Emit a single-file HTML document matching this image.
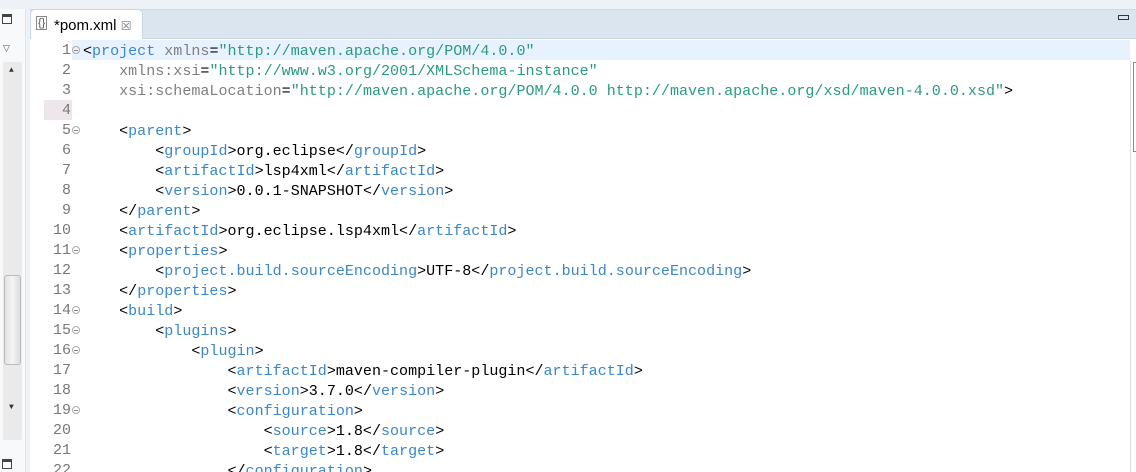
<!DOCTYPE html>
<html><head><meta charset="utf-8"><style>
*{margin:0;padding:0;box-sizing:border-box}
html,body{width:1136px;height:472px;overflow:hidden}
body{background:#eef1f6;position:relative;font-family:"Liberation Mono",monospace}
.lp{position:absolute;left:0;top:9px;width:26px;height:463px;background:#f7f9fb;border-right:1px solid #e0e4ea}
.sb{position:absolute;left:3px;top:53px;width:19px;height:378px;background:#eaeaea;border-radius:2px}
.thumb{position:absolute;left:1px;top:213px;width:17px;height:90px;background:linear-gradient(90deg,#e2e2e2,#f4f4f4,#dcdcdc);border:1px solid #bcbcbc;border-radius:3px}
.tabbar{position:absolute;left:30px;top:9px;width:1106px;height:30px;background:#dae5f0;border-top:1px solid #cfd9e4;border-bottom:1px solid #c9d6e3}
.tab{position:absolute;left:30px;top:9px;width:113px;height:30px;background:#fff;border:1px solid #c9d6e3;border-bottom:none;border-radius:5px 5px 0 0;font:15px "Liberation Sans",sans-serif;color:#000;padding:7px 0 0 23px}
.editor{position:absolute;left:30px;top:39px;width:1106px;height:433px;background:#fff}
.hl{position:absolute;left:72px;top:40px;width:1058px;height:20px;background:#e8f2fe}
.g4{position:absolute;left:44px;top:100px;width:28px;height:20px;background:#ede6ea}
.ln{position:absolute;left:30px;top:41px;width:41px;text-align:right;color:#787878;font-size:15px;line-height:20px}
.code{position:absolute;left:83px;top:41px;font-size:15.05px;line-height:20px;white-space:pre;color:#000}
.t{color:#3b87c5}.a{color:#7f7f7f}.s{color:#2a9a82}
.f{position:absolute;left:72px;width:8px;height:8px;border:1px solid #aaa;border-radius:50%;font-size:0}
.f:after{content:"";position:absolute;left:1px;top:3px;width:4px;height:1px;background:#888}
.vs{position:absolute;left:1130px;top:61px;width:6px;height:411px;border-left:1px solid #ddd}
.vt{position:absolute;left:1133px;top:62px;width:3px;height:90px;border:1px solid #888;border-right:none}
</style></head><body>
<div class="lp"><div class="sb"><div class="thumb"></div></div></div>
<div style="position:absolute;left:2px;top:14px;width:10px;height:10px;border:1px solid #444;border-top-width:3px"></div>
<div style="position:absolute;left:3px;top:44px;font-size:9px;color:#555">▽</div>
<div style="position:absolute;left:9px;top:66px;font-size:8px;color:#333">▲</div>
<div style="position:absolute;left:9px;top:403px;font-size:8px;color:#333">▼</div>
<div style="position:absolute;left:2px;top:459px;width:10px;height:10px;border:1px solid #444;border-top-width:3px"></div>
<div class="tabbar"></div>
<div style="position:absolute;left:1118px;top:15px;width:11px;height:5px;border:1px solid #334"></div>
<div class="tab">*pom.xml <span style="font-size:12px;color:#777">☒</span></div>
<div style="position:absolute;left:36px;top:16px;font:11px 'Liberation Sans',sans-serif;color:#555;border:1px solid #888;width:11px;height:14px;line-height:12px;padding-left:1px">{}</div>
<div class="editor"></div>
<div class="hl"></div><div class="g4"></div>
<div class="vs"></div><div class="vt"></div>
<div class="ln">1<br>2<br>3<br>4<br>5<br>6<br>7<br>8<br>9<br>10<br>11<br>12<br>13<br>14<br>15<br>16<br>17<br>18<br>19<br>20<br>21<br>22</div>
<div class="f" style="top:46px"></div><div class="f" style="top:126px"></div><div class="f" style="top:246px"></div><div class="f" style="top:306px"></div><div class="f" style="top:326px"></div><div class="f" style="top:346px"></div><div class="f" style="top:406px"></div>
<div class="code">&lt;<span class="t">project</span> <span class="a">xmlns</span>=<span class="s">"http://maven.apache.org/POM/4.0.0"</span>
    <span class="a">xmlns:xsi</span>=<span class="s">"http://www.w3.org/2001/XMLSchema-instance"</span>
    <span class="a">xsi:schemaLocation</span>=<span class="s">"http://maven.apache.org/POM/4.0.0 http://maven.apache.org/xsd/maven-4.0.0.xsd"</span>&gt;

    &lt;<span class="t">parent</span>&gt;
        &lt;<span class="t">groupId</span>&gt;org.eclipse&lt;/<span class="t">groupId</span>&gt;
        &lt;<span class="t">artifactId</span>&gt;lsp4xml&lt;/<span class="t">artifactId</span>&gt;
        &lt;<span class="t">version</span>&gt;0.0.1-SNAPSHOT&lt;/<span class="t">version</span>&gt;
    &lt;/<span class="t">parent</span>&gt;
    &lt;<span class="t">artifactId</span>&gt;org.eclipse.lsp4xml&lt;/<span class="t">artifactId</span>&gt;
    &lt;<span class="t">properties</span>&gt;
        &lt;<span class="t">project.build.sourceEncoding</span>&gt;UTF-8&lt;/<span class="t">project.build.sourceEncoding</span>&gt;
    &lt;/<span class="t">properties</span>&gt;
    &lt;<span class="t">build</span>&gt;
        &lt;<span class="t">plugins</span>&gt;
            &lt;<span class="t">plugin</span>&gt;
                &lt;<span class="t">artifactId</span>&gt;maven-compiler-plugin&lt;/<span class="t">artifactId</span>&gt;
                &lt;<span class="t">version</span>&gt;3.7.0&lt;/<span class="t">version</span>&gt;
                &lt;<span class="t">configuration</span>&gt;
                    &lt;<span class="t">source</span>&gt;1.8&lt;/<span class="t">source</span>&gt;
                    &lt;<span class="t">target</span>&gt;1.8&lt;/<span class="t">target</span>&gt;
                &lt;/<span class="t">configuration</span>&gt;</div>
</body></html>
